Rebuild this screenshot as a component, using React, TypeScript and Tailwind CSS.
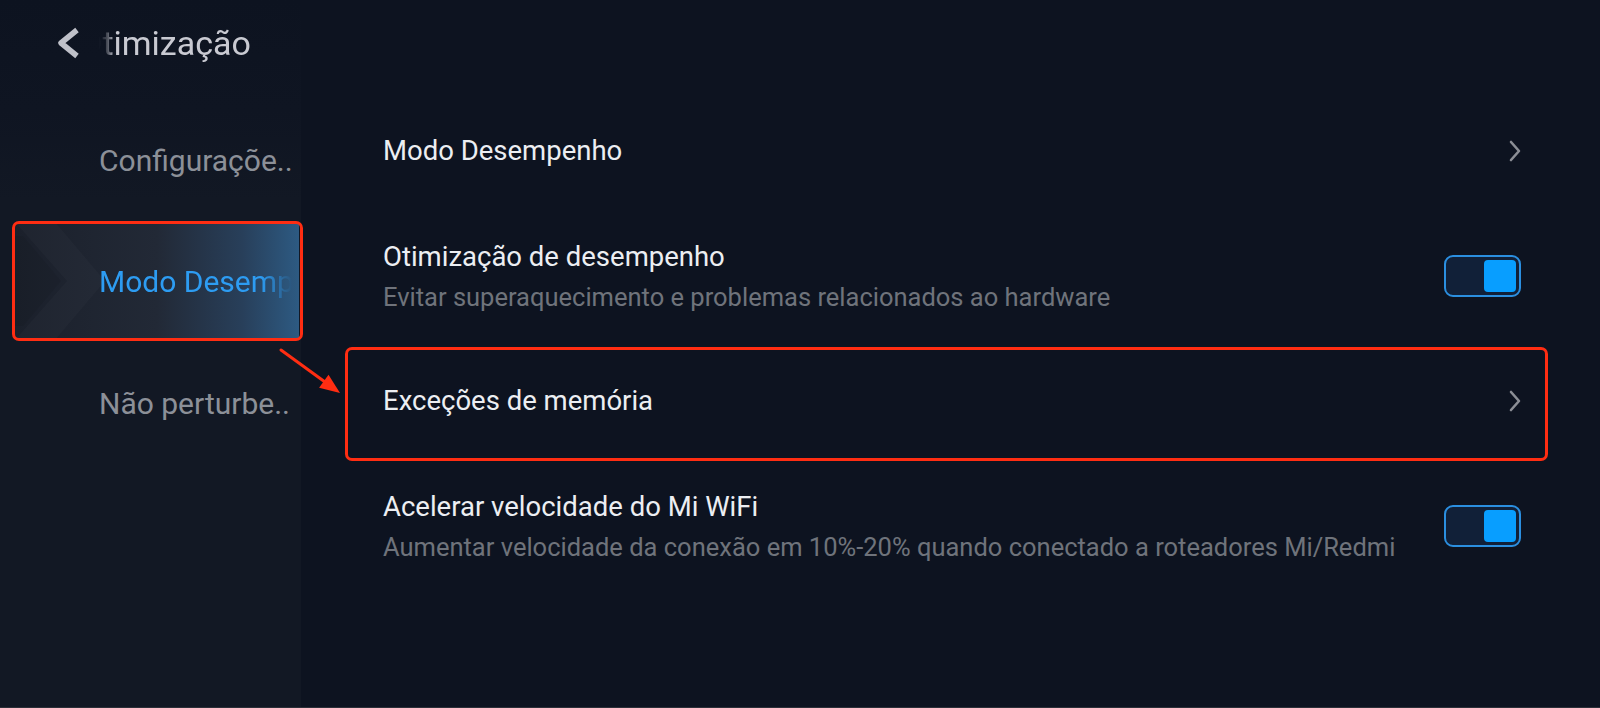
import { ReactNode } from "react";

function ChevronRight() {
  return (
    <svg width="12" height="22" viewBox="0 0 12 22" fill="none" className="shrink-0">
      <polyline
        points="2,2 10,11 2,20"
        stroke="#8b8e95"
        strokeWidth="2.6"
        strokeLinecap="round"
        strokeLinejoin="round"
      />
    </svg>
  );
}

function Toggle() {
  return (
    <div className="flex h-[42px] w-[77px] shrink-0 items-center justify-end rounded-[9px] border-2 border-[#2b8fe0] bg-[#112038] pr-[3px]">
      <div className="h-[32px] w-[32px] rounded-[4px] bg-[#089eff]" />
    </div>
  );
}

interface RowProps {
  title: string;
  subtitle?: string;
  right: ReactNode;
  children?: ReactNode;
}

function Row({ title, subtitle, right, children }: RowProps) {
  return (
    <div className="relative flex h-[125px] items-center justify-between">
      <div className="flex flex-col">
        <span className="text-[27.5px] leading-[34px] text-[#eceef2]">{title}</span>
        {subtitle && (
          <span className="mt-[8px] text-[25.5px] leading-[30px] text-[#6f737b]">{subtitle}</span>
        )}
      </div>
      {right}
      {children}
    </div>
  );
}

export default function App() {
  return (
    <div className="relative flex h-[708px] w-[1600px] flex-col overflow-hidden bg-[#0d1320] font-['Roboto',sans-serif]">
      <div className="flex flex-1">
        {/* Sidebar */}
        <aside className="flex w-[301px] shrink-0 flex-col bg-[linear-gradient(to_bottom,#0d1320_0px,#0f1522_110px,#121824_200px)]">
          <header className="flex h-[86px] items-center pl-[56px]">
            <svg width="25" height="32" viewBox="0 0 25 32" fill="none" className="shrink-0">
              <polyline
                points="21,3 5,16 21,29"
                stroke="#bfc1c9"
                strokeWidth="5.5"
                strokeLinejoin="round"
              />
            </svg>
            <div className="ml-[18px] overflow-hidden [mask-image:linear-gradient(to_right,transparent_0px,rgba(0,0,0,0.3)_8px,black_16px)]">
              <span className="-ml-[20px] block whitespace-nowrap text-[34px] leading-[40px] text-[#c9cad2]">
                Otimização
              </span>
            </div>
          </header>

          <nav className="flex flex-col gap-[3px] pt-[15px]">
            <div className="flex h-[118px] items-center pl-[99px] text-[30px] text-[#8c9098]">
              Configuraçõe..
            </div>

            <div className="relative ml-[15px] flex h-[118px] w-[284px] items-center overflow-visible rounded-[3px] bg-[linear-gradient(90deg,#1b202b_0%,#222936_50%,#283f5a_80%,#2d5a82_100%)]">
              <svg
                width="110"
                height="118"
                viewBox="0 0 110 118"
                className="absolute left-0 top-0"
              >
                <polygon points="0,0 40,0 90,59 40,118 0,118 52,59" fill="#ffffff" fillOpacity="0.02" />
                <polygon points="0,14 8,14 46,59 8,104 0,104" fill="#000000" fillOpacity="0.06" />
              </svg>
              <div className="relative ml-[84px] w-[193px] overflow-hidden [mask-image:linear-gradient(to_right,black_84%,transparent)]">
                <span className="block whitespace-nowrap text-[30px] text-[#2d9cf2]">Modo Desempenho</span>
              </div>
              <div className="pointer-events-none absolute -bottom-[1px] -left-[3px] -right-[4px] -top-[1px] rounded-[7px] border-[3px] border-[#ff2d12]" />
            </div>

            <div className="mt-[1px] flex h-[118px] items-center pl-[99px] text-[30px] text-[#8c9098]">
              Não perturbe..
            </div>
          </nav>
        </aside>

        {/* Main list */}
        <main className="flex flex-1 flex-col pl-[82px] pr-[79px] pt-[88px]">
          <Row title="Modo Desempenho" right={<ChevronRight />} />
          <Row
            title="Otimização de desempenho"
            subtitle="Evitar superaquecimento e problemas relacionados ao hardware"
            right={<Toggle />}
          />
          <Row title="Exceções de memória" right={<ChevronRight />}>
            <div className="pointer-events-none absolute -left-[38px] -right-[27px] bottom-[2px] top-[9px] rounded-[7px] border-[3px] border-[#ff2d12]" />
          </Row>
          <Row
            title="Acelerar velocidade do Mi WiFi"
            subtitle="Aumentar velocidade da conexão em 10%-20% quando conectado a roteadores Mi/Redmi"
            right={<Toggle />}
          />
        </main>
      </div>
      <div className="h-px bg-[#2c3039]" />

      {/* annotation arrow */}
      <svg
        width="70"
        height="55"
        viewBox="0 0 70 55"
        className="pointer-events-none absolute left-[276px] top-[344px]"
      >
        <line x1="5" y1="6" x2="49" y2="38" stroke="#ff2d12" strokeWidth="3" strokeLinecap="round" />
        <polygon points="64,49 43.1,43.7 52.5,30.7" fill="#ff2d12" />
      </svg>
    </div>
  );
}
